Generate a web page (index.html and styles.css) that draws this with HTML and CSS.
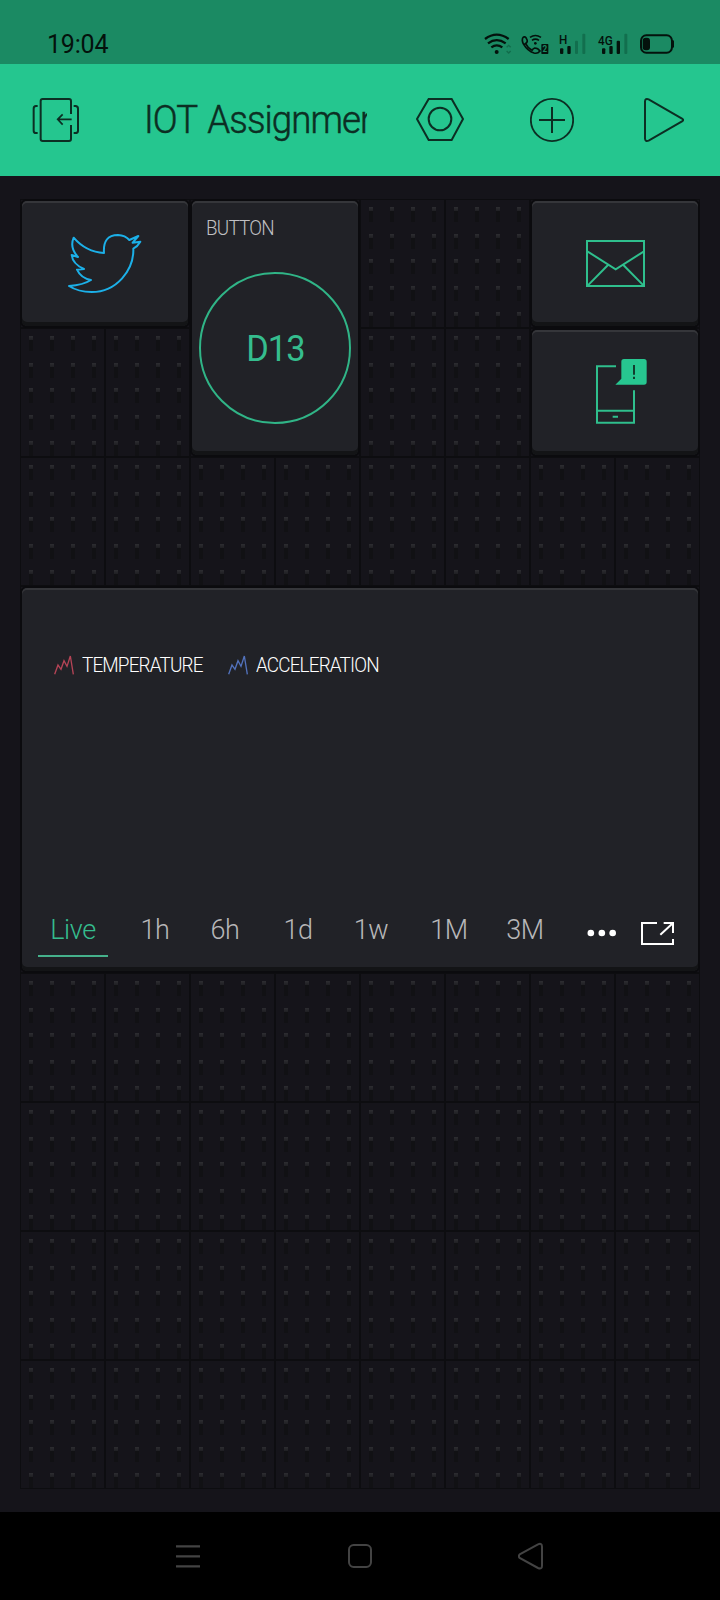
FILE: index.html
```html
<!DOCTYPE html>
<html lang="en">
<head>
<meta charset="utf-8">
<title>IOT Assignment</title>
<link rel="stylesheet" href="styles.css">
</head>
<body>
<div class="screen">
  <div class="status">
    <span class="clock">19:04</span>
    <svg class="status-icons" viewBox="372 99 576 66" width="192" height="22">
      <g fill="none" stroke="#04120c" stroke-width="7">
        <path d="M375 117Q410 91 446 117"/>
        <path d="M384 130Q410 111 437 130"/>
        <path d="M394 142Q410 130 427 142"/>
      </g>
      <circle cx="410" cy="156" r="6"/>
      <path d="M440 142l6-6 6 6M440 153l6 6 6-6" fill="none" stroke="#126c4b" stroke-width="4"/>
      <g fill="none" stroke="#04120c" stroke-width="5">
        <path d="M489 112Q484 121 491 133Q503 153 522 159Q533 162 540 153Q534 144 524 144Q518 146 516 152M489 112Q494 108 499 115Q506 126 496 131L493 133M497 131Q503 144 516 151"/>
        <path d="M510 112Q526 101 543 112M516 121Q526 114 537 121"/>
      </g>
      <circle cx="526" cy="130" r="4"/>
      <rect x="544" y="132" width="21" height="30" rx="2"/>
      <text x="547.5" y="157" font-size="26" textLength="14" lengthAdjust="spacingAndGlyphs" style="fill:#1b8a63">2</text>
      <text class="net" x="597" y="132" font-size="40" textLength="25" lengthAdjust="spacingAndGlyphs">H</text>
      <rect x="600" y="145" width="10" height="17" rx="3"/>
      <rect x="622" y="138" width="10" height="24" rx="3"/>
      <rect x="645" y="122" width="9" height="40" rx="3" fill="#126f4e"/>
      <rect x="667" y="101" width="9" height="61" rx="3" fill="#126f4e"/>
      <text class="net" x="714" y="134" font-size="40" textLength="44" lengthAdjust="spacingAndGlyphs">4G</text>
      <rect x="726" y="145" width="10" height="17" rx="3"/>
      <rect x="748" y="138" width="10" height="24" rx="3"/>
      <rect x="770" y="122" width="10" height="40" rx="3"/>
      <rect x="793" y="101" width="9" height="61" rx="3" fill="#126f4e"/>
      <rect x="843" y="106" width="93" height="52" rx="16" fill="none" stroke="#04120c" stroke-width="6"/>
      <rect x="848" y="113" width="22" height="38" rx="9"/>
      <rect x="935" y="121" width="7" height="22" rx="3"/>
    </svg>
  </div>

  <header class="bar">
    <svg class="ic-exit" viewBox="97 291 141 138" width="47" height="46">
      <path d="M214 342V303Q214 297 208 297H129Q123 297 123 303V417Q123 423 129 423H208Q214 423 214 417V375" stroke-width="6"/>
      <path d="M114 318H109Q102 318 102 326V392Q102 399 109 399H114M222 318H227Q235 318 235 326V392Q235 399 227 399H222" stroke-width="6"/>
      <path d="M216 358H174M189 343L174 358L189 374" stroke-width="5"/>
    </svg>
    <h1 class="title"><span class="title-text">IOT Assignmen</span></h1>
    <svg class="ic-nut" viewBox="168 291 144 135" width="48" height="45">
      <path d="M171 357L206 297H275L309 357L275 420H206Z" stroke-width="6"/>
      <circle cx="240" cy="357" r="34" stroke-width="6"/>
    </svg>
    <svg class="ic-add" viewBox="510 291 132 138" width="44" height="46">
      <circle cx="576" cy="360" r="63.5" stroke-width="5.500"/>
      <path d="M576 321V399M537 360H615" stroke-width="6"/>
    </svg>
    <svg class="ic-play" viewBox="852 291 120 138" width="40" height="46">
      <path d="M855 304V416Q856 426 866 422L966 364Q973 360 966 356L866 298Q856 294 855 304Z" stroke-width="6"/>
    </svg>
  </header>

  <main class="board">
    <svg class="slots" width="680" height="1290">
      <defs>
        <linearGradient id="peg" x1="0" y1="0" x2="0" y2="1">
          <stop offset="0" stop-color="#2d2d31"/><stop offset="1" stop-color="#1f1f23"/>
        </linearGradient>
        <g id="dot"><rect width="4" height="4" fill="url(#peg)"/><rect y="4" width="4" height="11" fill="#111114"/></g>
        <g id="dots"><use href="#dot" x="9"/><use href="#dot" x="30"/><use href="#dot" x="51"/><use href="#dot" x="72"/></g>
        <pattern id="slot" width="85" height="129" patternUnits="userSpaceOnUse">
          <rect width="85" height="129" fill="#15141a"/>
          <use href="#dots" y="8"/><use href="#dots" y="35"/><use href="#dots" y="60"/><use href="#dots" y="87"/><use href="#dots" y="113"/>
          <rect x=".5" y=".5" width="84" height="128" fill="none" stroke="#0d0d10"/>
        </pattern>
      </defs>
      <rect width="680" height="1290" fill="url(#slot)"/>
    </svg>

    <section class="widget w-twitter">
      <svg viewBox="198 150 234 201" width="78" height="67">
        <path d="M207 318Q250 315 273 300Q243 295 231 269L252 267Q218 252 215 225L234 231Q208 203 221 173Q258 216 312 219Q308 165 354 165Q376 166 388 180L415 168L398 188L421 185Q412 200 400 206C402 270 350 336 275 336Q235 336 207 318Z" fill="none" stroke="#1cb0e8" stroke-width="6" stroke-linejoin="round"/>
      </svg>
    </section>

    <section class="widget w-button">
      <span class="label">BUTTON</span>
      <div class="knob"><span class="pin">D13</span></div>
    </section>

    <section class="widget w-mail">
      <svg viewBox="705 177 183 147" width="61" height="49">
        <g fill="none" stroke="#2fbf8d" stroke-width="6">
          <rect x="711" y="183" width="171" height="135"/>
          <path d="M712 214L797 268L882 214M774 255L713 317M820 255L881 317"/>
        </g>
      </svg>
    </section>

    <section class="widget w-push">
      <svg viewBox="696 534 201 201" width="67" height="67">
        <g fill="none" stroke="#2fbf8d" stroke-width="6">
          <path d="M798 559H741V728H852V631M741 692H852M788 710H804"/>
        </g>
        <path d="M822 537H882Q890 537 890 545V606Q890 614 882 614H796L814 596V545Q814 537 822 537Z" fill="#27c690"/>
        <path d="M852 555V584M852 590V597" stroke="#123d2e" stroke-width="6"/>
      </svg>
    </section>

    <section class="widget w-chart">
      <div class="legend">
        <svg viewBox="162 255 60 60" width="20" height="20"><path d="M164 313L174 285L183 298L192 272L201 289L211 258L220 313" fill="none" stroke="#b54456" stroke-width="4"/></svg>
        <span class="series s-temp">TEMPERATURE</span>
        <svg viewBox="162 255 60 60" width="20" height="20"><path d="M164 313L174 285L183 298L192 272L201 289L211 258L220 313" fill="none" stroke="#5272bd" stroke-width="4"/></svg>
        <span class="series s-acc">ACCELERATION</span>
      </div>
      <div class="ranges">
        <nav class="tabs">
          <span class="tab active">Live</span><span class="tab">1h</span><span class="tab">6h</span><span class="tab">1d</span><span class="tab">1w</span><span class="tab">1M</span><span class="tab">3M</span>
        </nav>
        <svg class="more" viewBox="681 147 90 24" width="30" height="8"><g fill="#fff"><circle cx="692.500" cy="159" r="10"/><circle cx="725.500" cy="159" r="10"/><circle cx="758" cy="159" r="10"/></g></svg>
        <svg class="expand" viewBox="843 123 99 72" width="33" height="24"><path d="M891 129H846V192H939V177M911 129H939V159M939 129L901 164" fill="none" stroke="#fff" stroke-width="6"/></svg>
      </div>
    </section>
  </main>

  <footer class="sysnav">
    <svg viewBox="228 306 72 84" width="24" height="28"><path d="M228 319H300M228 349H300M228 379H300" stroke-width="7"/></svg>
    <svg class="home" viewBox="744 306 72 84" width="24" height="28"><rect x="747" y="315" width="66" height="66" rx="14" stroke-width="6"/></svg>
    <svg viewBox="1254 306 75 84" width="25" height="28"><path d="M1259 343L1314 313Q1326 308 1326 320V377Q1326 389 1314 384L1259 354Q1254 349 1259 343Z" stroke-width="6"/></svg>
  </footer>
</div>
</body>
</html>
```

FILE: styles.css
```css
* { box-sizing: border-box; }
body { margin: 0; background: #000; }
svg { display: block; flex: none; }

.screen {
  width: 720px;
  height: 1600px;
  display: flex;
  flex-direction: column;
  overflow: hidden;
  background: #15141a;
  font-family: Roboto, "Liberation Sans", sans-serif;
  font-weight: 300;
  white-space: nowrap;
}

.status {
  height: 64px;
  flex: none;
  display: flex;
  justify-content: space-between;
  align-items: flex-start;
  padding: 33px 44px 0 47px;
  background: #1b8a63;
}
.clock { padding-top: 1px; font-size: 25px; line-height: 22px; font-weight: 400; letter-spacing: -.2px; color: #04120c; }
.status-icons { fill: #04120c; }
.status-icons text { font-weight: 700; }
.status-icons .net { font-weight: 500; }

.bar {
  height: 112px;
  flex: none;
  display: flex;
  align-items: flex-start;
  padding: 33px 0 0 32px;
  background: #25c68f;
}
.bar svg { fill: none; stroke: #0c2e23; }
.title {
  width: 223px;
  height: 60px;
  margin: -7px 49px 0 65px;
  overflow: hidden;
  font-size: 39px;
  font-weight: 300;
  line-height: 60px;
}
.title-text {
  display: inline-block;
  letter-spacing: -1px;
  word-spacing: 3px;
  color: #0c2e23;
  -webkit-text-stroke: .5px #0c2e23;
  transform: scaleX(.94);
  transform-origin: left;
}
.ic-add { margin-left: 66px; }
.ic-play { margin-left: 70px; }

.board {
  flex: 1;
  display: grid;
  grid-template-columns: repeat(8, 85px);
  grid-template-rows: repeat(10, 129px);
  padding: 23px 20px;
}
.slots { grid-area: 1 / 1 / 11 / 9; }

.widget {
  z-index: 1;
  margin: 2px;
  display: flex;
  align-items: center;
  justify-content: center;
  border-radius: 5px;
  background: #212227;
  box-shadow: inset 0 2px #35363a, inset 0 -4px #131416, 0 0 0 2px #0b0b0e;
}
.w-twitter { grid-area: 1 / 1 / 2 / 3; }
.w-button {
  grid-area: 1 / 3 / 3 / 5;
  flex-direction: column;
  align-items: center;
  justify-content: flex-start;
  padding-top: 15px;
}
.w-mail { grid-area: 1 / 7 / 2 / 9; }
.w-push { grid-area: 2 / 7 / 3 / 9; padding-bottom: 2px; }
.w-chart {
  grid-area: 4 / 1 / 7 / 9;
  flex-direction: column;
  align-items: stretch;
  justify-content: space-between;
  padding: 65px 24px 12px 32px;
}

.label {
  align-self: flex-start;
  margin-left: 14px;
  font-size: 20px;
  line-height: 24px;
  letter-spacing: -.8px;
  color: #c0c0c3;
  transform: scaleX(.94);
  transform-origin: left;
}
.knob {
  width: 152px;
  height: 152px;
  margin-top: 32px;
  display: flex;
  align-items: center;
  justify-content: center;
  border: 2px solid #30b587;
  border-radius: 50%;
}
.pin {
  padding-top: 1px;
  font-size: 37px;
  line-height: 44px;
  font-weight: 400;
  letter-spacing: -1px;
  color: #35bd8e;
  transform: scaleX(.93);
}

.legend { display: flex; align-items: center; height: 24px; color: #fff; font-size: 20px; line-height: 24px; }
.series { width: 126px; margin: 0 20px 0 8px; letter-spacing: -.9px; transform: scaleX(.945); transform-origin: left; }

.ranges { display: flex; align-items: flex-start; height: 49px; margin-left: -16px; }
.tabs { display: grid; grid-template-columns: 70px 94px 46px 100px 46px 110px 42px; }
.tab { height: 47px; text-align: center; font-size: 27px; line-height: 41px; letter-spacing: -.4px; color: #b7b7b9; }
.tab.active { color: #35bd8e; border-bottom: 2px solid #45b18b; }
.more { margin: 19px 0 0 41px; }
.expand { margin: 11px 0 0 24px; }

.sysnav {
  height: 88px;
  flex: none;
  display: flex;
  justify-content: space-between;
  padding: 30px 177px 0 176px;
  background: #000;
}
.sysnav svg { fill: none; stroke: #434343; }
.sysnav .home { margin-left: 1px; }
```
